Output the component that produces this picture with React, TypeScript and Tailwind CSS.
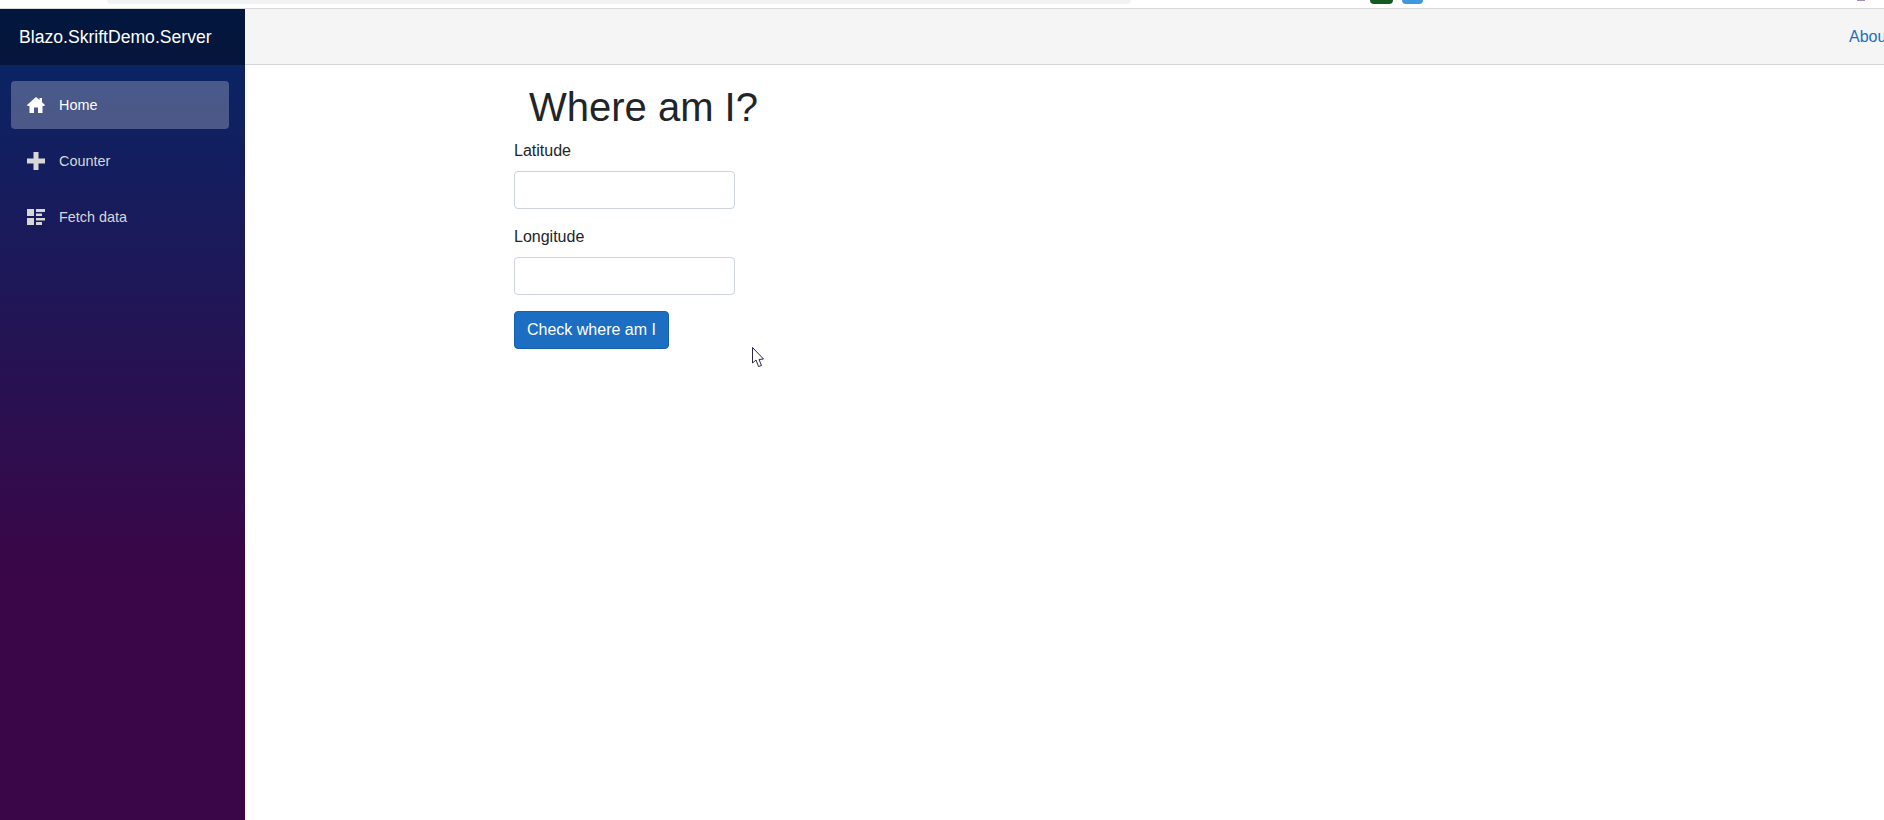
import React from 'react';

const sansFont = "font-['Liberation_Sans',Arial,sans-serif]";

const HomeIcon = () => (
  <svg width="18" height="16" viewBox="0 0 18 16" className="fill-white">
    <path d="M9 0 L12.5 3 V1 H15 V5.2 L18 8 L17.2 9 H15.5 V16 H11 V10.5 H7 V16 H2.5 V9 H0.8 L0 8 Z" />
  </svg>
);

const PlusIcon = () => (
  <svg width="18" height="18" viewBox="0 0 18 18" className="fill-[#d7d7d7]">
    <path d="M6.5 0 H11.5 V6.5 H18 V11.5 H11.5 V18 H6.5 V11.5 H0 V6.5 H6.5 Z" />
  </svg>
);

const ListIcon = () => (
  <svg width="18" height="16" viewBox="0 0 18 16" className="fill-[#d7d7d7]">
    <path d="M0 0 H7 V7 H0 Z M0 9 H7 V16 H0 Z M9 0 H18 V3 H9 Z M9 4.5 H15 V7 H9 Z M9 9 H18 V11.5 H9 Z M9 13 H15 V16 H9 Z" />
  </svg>
);

const NavItem = ({ icon, label, active }: { icon: React.ReactNode; label: string; active?: boolean }) => (
  <div
    className={
      active
        ? 'flex h-12 items-center rounded bg-white/25 text-white'
        : 'flex h-12 items-center rounded text-[#d7d7d7]'
    }
  >
    <span className="ml-4 flex w-[18px] justify-center">{icon}</span>
    <span className="ml-[14px] pt-px text-[14.4px]">{label}</span>
  </div>
);

const Field = ({ label }: { label: string }) => (
  <div className="mb-4">
    <label className="mb-2 block h-6 text-base leading-6 text-[#212529]">{label}</label>
    <input className="block h-[38px] w-[221px] rounded border border-[#ced4da] bg-white" />
  </div>
);

export default function App() {
  return (
    <div className={`flex h-[820px] w-[1884px] flex-col overflow-hidden bg-white ${sansFont}`}>
      {/* browser chrome left over at the top of the capture */}
      <div className="relative h-[9px] shrink-0 border-b border-[#d9d9d9] bg-white">
        <div className="absolute left-[107px] top-0 h-1 w-[1024px] rounded-b-md bg-[#f1f3f4]" />
        <div className="absolute left-[1370px] top-0 h-1 w-[23px] rounded-b-sm bg-[#14591f]" />
        <div className="absolute left-[1402px] top-0 h-1 w-[21px] rounded-b-sm bg-[#3f97e0]" />
        <div className="absolute left-[1857px] top-0 h-px w-2 bg-[#a58fb5]" />
      </div>

      <div className="flex min-h-0 flex-1">
        <aside className="flex w-[245px] shrink-0 flex-col bg-[linear-gradient(180deg,#052767_0%,#3a0647_70%)]">
          <div className="flex h-14 shrink-0 items-center bg-black/40 pl-[19px] text-[17.6px] text-white">
            Blazo.SkriftDemo.Server
          </div>
          <nav className="flex flex-col gap-2 pl-[11px] pr-4 pt-4">
            <NavItem icon={<HomeIcon />} label="Home" active />
            <NavItem icon={<PlusIcon />} label="Counter" />
            <NavItem icon={<ListIcon />} label="Fetch data" />
          </nav>
        </aside>

        <main className="min-w-0 flex-1">
          <div className="flex h-[56px] items-center justify-end overflow-hidden border-b border-[#d6d5d5] bg-[#f5f5f5]">
            <a className="-mr-[25px] w-[60px] shrink-0 whitespace-nowrap text-base text-[#1b6ec2]">About</a>
          </div>
          <div className="pl-[269px] pt-[18px]">
            <h1 className="mb-2 pl-[15px] text-[40px] leading-[48px] text-[#212529]">Where am I?</h1>
            <Field label="Latitude" />
            <Field label="Longitude" />
            <button className="h-[38px] rounded border border-[#1861ac] bg-[#1b6ec2] px-3 text-base text-white">
              Check where am I
            </button>
          </div>
        </main>
      </div>

      {/* mouse pointer caught in the capture */}
      <svg width="14" height="21" viewBox="0 0 14 21" className="absolute left-[751px] top-[347px]">
        <path d="M1.5 0.5 V16 L5 13 L7.5 19.5 L10.5 18.5 L8 12.5 L12.5 12 Z" className="fill-white stroke-[#2b2440]" />
      </svg>
    </div>
  );
}
